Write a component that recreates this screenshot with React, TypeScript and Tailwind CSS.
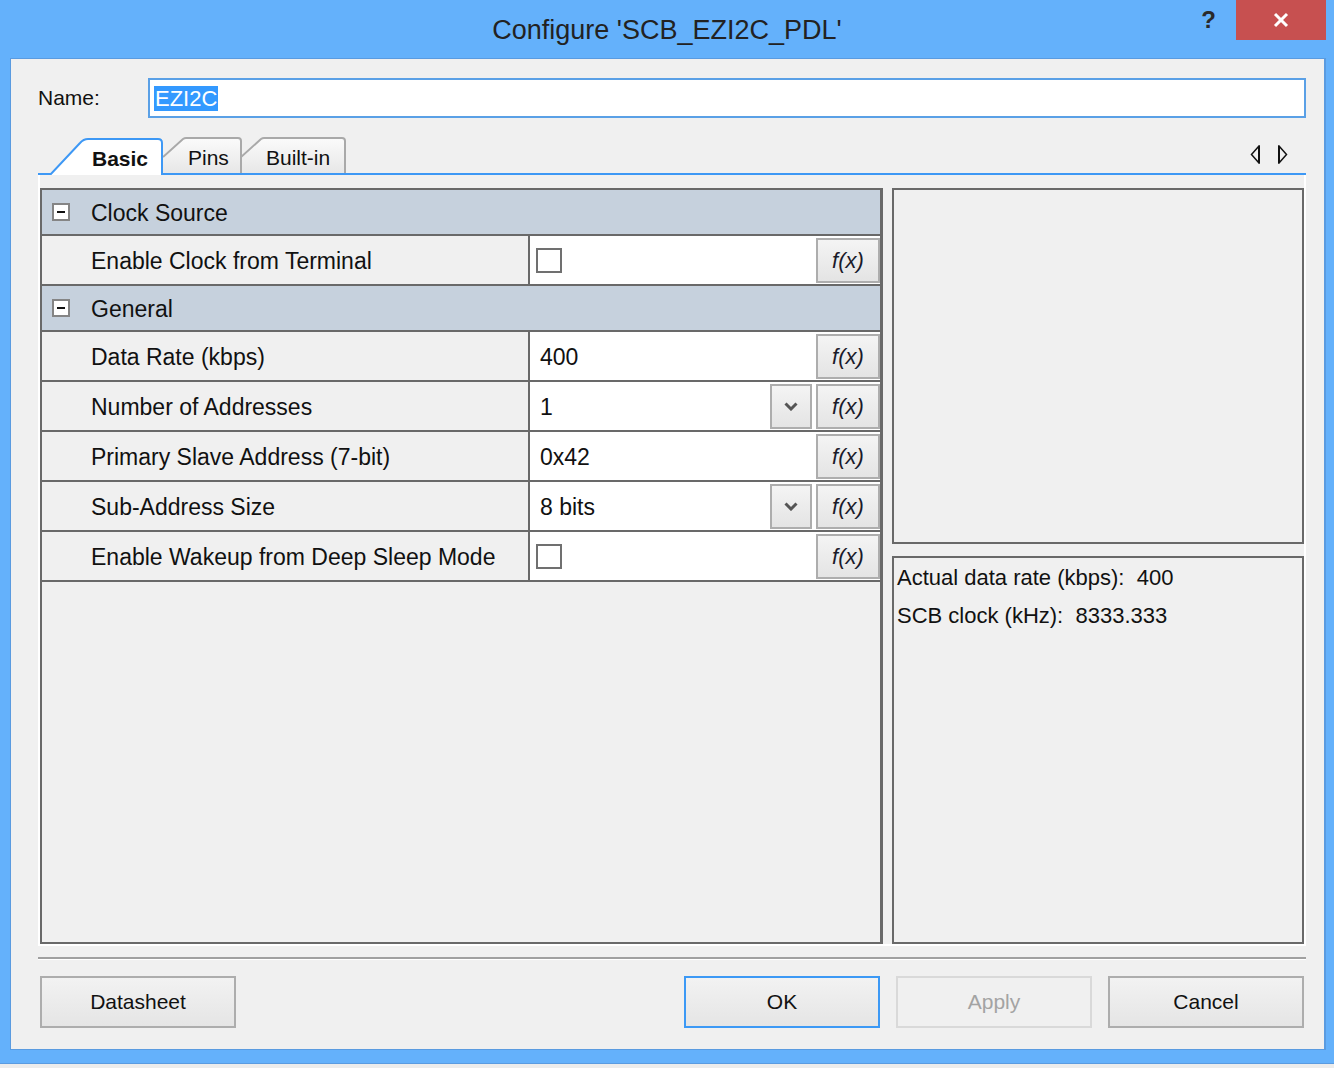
import React from "react";

const FONT = "font-['Liberation_Sans',Arial,sans-serif]";

function Fx() {
  return (
    <div className="mt-[2px] flex h-[45px] w-[64px] shrink-0 items-center justify-center self-start border-2 border-[#adadad] bg-linear-to-b from-[#f4f4f4] to-[#e4e4e4] pb-[1px] text-[22px] italic text-[#1a1a2a]">
      f(x)
    </div>
  );
}

function Drop() {
  return (
    <div className="mr-[4px] mt-[2px] flex h-[45px] w-[42px] shrink-0 items-center justify-center self-start border-2 border-[#adadad] bg-linear-to-b from-[#f4f4f4] to-[#e4e4e4]">
      <svg width="14" height="9" viewBox="0 0 14 9">
        <polyline points="1.5,1.5 7,7 12.5,1.5" fill="none" stroke="#555" strokeWidth="3" />
      </svg>
    </div>
  );
}

function Category({ label }: { label: string }) {
  return (
    <div className="flex h-[46px] items-center border-b-2 border-[#696969] bg-[#c6d1dd]">
      <div className="ml-[10px] flex h-[18px] w-[18px] items-center justify-center border-2 border-[#858585] bg-white">
        <div className="h-[2px] w-[8px] bg-[#111]" />
      </div>
      <span className="ml-[21px] pt-[3px] text-[23px] text-[#111]">{label}</span>
    </div>
  );
}

function PropRow({
  label,
  value,
  checkbox,
  dropdown,
}: {
  label: string;
  value?: string;
  checkbox?: boolean;
  dropdown?: boolean;
}) {
  return (
    <div className="flex h-[50px] border-b-2 border-[#696969]">
      <div className="flex w-[488px] items-center border-r-2 border-[#696969] bg-[#f0f0f0] pl-[49px] pt-[3px] text-[23px] text-[#111]">
        {label}
      </div>
      <div className="flex flex-1 items-center bg-white">
        {checkbox ? (
          <div className="flex flex-1 items-center pl-[6px] pt-[1px]">
            <div className="h-[25px] w-[26px] border-2 border-[#707070] bg-white" />
          </div>
        ) : (
          <div className="flex flex-1 items-center pl-[10px] pt-[3px] text-[23px] text-[#111]">{value}</div>
        )}
        {dropdown && <Drop />}
        <Fx />
      </div>
    </div>
  );
}

function Button({
  label,
  variant = "normal",
}: {
  label: string;
  variant?: "normal" | "default" | "disabled";
}) {
  const border =
    variant === "default"
      ? "border-[#3c99f5]"
      : variant === "disabled"
      ? "border-[#d9d9d9]"
      : "border-[#adadad]";
  const text = variant === "disabled" ? "text-[#a3a3a3]" : "text-[#111]";
  const bg =
    variant === "disabled"
      ? "bg-[#f0f0f0]"
      : "bg-linear-to-b from-[#f2f2f2] to-[#e5e5e5]";
  return (
    <div
      className={`flex h-[52px] w-[196px] items-center justify-center border-2 ${border} ${bg} ${text} text-[21px]`}
    >
      {label}
    </div>
  );
}

export default function App() {
  return (
    <div className={`${FONT} flex h-[1068px] w-[1334px] flex-col bg-[#64b1fb]`}>
      {/* Title bar */}
      <div className="grid h-[58px] grid-cols-[1fr_auto_1fr]">
        <div />
        <div className="flex items-center pt-[2px] text-[27px] text-[#222]">
          Configure 'SCB_EZI2C_PDL'
        </div>
        <div className="flex items-start justify-end pr-[8px]">
          <div className="mr-[20px] mt-[5px] text-[24px] font-bold leading-[30px] text-[#2a2a2a]">?</div>
          <div className="flex h-[40px] w-[90px] items-center justify-center bg-[#c75050]">
            <svg width="16" height="16" viewBox="0 0 16 16">
              <line x1="2" y1="2" x2="14" y2="14" stroke="white" strokeWidth="3" />
              <line x1="14" y1="2" x2="2" y2="14" stroke="white" strokeWidth="3" />
            </svg>
          </div>
        </div>
      </div>

      {/* Client area */}
      <div className="ml-[10px] mr-[8px] flex h-[992px] flex-col border border-r-2 border-[#5a9be0] bg-[#f0f0f0] pl-[27px] pr-[18px]">
        {/* Name row */}
        <div className="mt-[19px] flex h-[40px] items-center">
          <div className="w-[110px] text-[21px] text-[#111]">Name:</div>
          <div className="flex h-[40px] flex-1 items-center border-2 border-[#5aa0e6] bg-white pl-[4px]">
            <span className="bg-[#3399ff] px-[1px] text-[22px] leading-[25px] text-white">EZI2C</span>
          </div>
        </div>

        {/* Tabs */}
        <div className="mt-[19px] flex h-[38px] items-end border-b-2 border-[#3d98f5]">
          <div className="relative z-10 -mb-[2px] ml-[10px] flex h-[38px] w-[117px] items-center pl-[44px] pt-[5px]">
            <svg className="absolute inset-0" width="117" height="38" viewBox="0 0 117 38">
              <path d="M2 38 L32 6 Q35.5 2 40 2 L110 2 Q114 2 114 6 L114 38 Z" fill="white" />
              <path d="M2 38 L32 6 Q35.5 2 40 2 L110 2 Q114 2 114 6 L114 38" fill="none" stroke="#3d98f5" strokeWidth="2" />
            </svg>
            <span className="relative text-[21px] font-bold text-[#111]">Basic</span>
          </div>
          <div className="relative z-[5] -ml-[2px] flex h-[36px] w-[80px] items-center pl-[25px] pt-[5px]">
            <svg className="absolute inset-0" width="80" height="36" viewBox="0 0 80 36">
              <defs>
                <linearGradient id="tg" x1="0" y1="0" x2="0" y2="1">
                  <stop offset="0" stopColor="#fbfbfb" />
                  <stop offset="1" stopColor="#e7e7e7" />
                </linearGradient>
              </defs>
              <path d="M0 36 L0 20 L20 2 Q21.5 1 23 1 L75 1 Q78 1 78 4 L78 36 Z" fill="url(#tg)" />
              <path d="M0 20 L20 2 Q21.5 1 23 1 L75 1 Q78 1 78 4 L78 36" fill="none" stroke="#a9a9a9" strokeWidth="2" />
            </svg>
            <span className="relative text-[21px] text-[#111]">Pins</span>
          </div>
          <div className="relative -ml-[2px] flex h-[36px] w-[106px] items-center pl-[25px] pt-[5px]">
            <svg className="absolute inset-0" width="106" height="36" viewBox="0 0 106 36">
              <defs>
                <linearGradient id="tg2" x1="0" y1="0" x2="0" y2="1">
                  <stop offset="0" stopColor="#fbfbfb" />
                  <stop offset="1" stopColor="#e7e7e7" />
                </linearGradient>
              </defs>
              <path d="M0 36 L0 20 L20 2 Q21.5 1 23 1 L101 1 Q104 1 104 4 L104 36 Z" fill="url(#tg2)" />
              <path d="M0 20 L20 2 Q21.5 1 23 1 L101 1 Q104 1 104 4 L104 36" fill="none" stroke="#a9a9a9" strokeWidth="2" />
            </svg>
            <span className="relative text-[21px] text-[#111]">Built-in</span>
          </div>
          <div className="mb-[9px] ml-auto mr-[18px] flex items-center gap-[18px]">
            <svg width="10" height="19" viewBox="0 0 10 19">
              <polygon points="9,1 1.5,9.5 9,18" fill="none" stroke="#111" strokeWidth="1.5" />
              <line x1="9" y1="1" x2="9" y2="18" stroke="#111" strokeWidth="2" />
            </svg>
            <svg width="10" height="19" viewBox="0 0 10 19">
              <polygon points="1,1 8.5,9.5 1,18" fill="none" stroke="#111" strokeWidth="1.5" />
              <line x1="1" y1="1" x2="1" y2="18" stroke="#111" strokeWidth="2" />
            </svg>
          </div>
        </div>

        {/* Tab page */}
        <div className="flex h-[771px] border-x-2 border-b-2 border-white pt-[13px]">
          {/* Property grid */}
          <div className="flex h-[756px] w-[843px] flex-col border-2 border-r-[3px] border-[#696969] bg-[#f0f0f0]">
            <Category label="Clock Source" />
            <PropRow label="Enable Clock from Terminal" checkbox />
            <Category label="General" />
            <PropRow label="Data Rate (kbps)" value="400" />
            <PropRow label="Number of Addresses" value="1" dropdown />
            <PropRow label="Primary Slave Address (7-bit)" value="0x42" />
            <PropRow label="Sub-Address Size" value="8 bits" dropdown />
            <PropRow label="Enable Wakeup from Deep Sleep Mode" checkbox />
          </div>
          <div className="w-[9px]" />
          {/* Right panels */}
          <div className="flex w-[412px] flex-col gap-[12px]">
            <div className="h-[356px] border-2 border-[#696969]" />
            <div className="flex-1 border-2 border-[#696969] pl-[3px] pt-[1px] text-[22px] leading-[38px] text-[#111]">
              <div className="whitespace-pre">Actual data rate (kbps):  400</div>
              <div className="whitespace-pre">SCB clock (kHz):  8333.333</div>
            </div>
          </div>
        </div>

        {/* Separator */}
        <div className="mt-[11px] h-[3px] border-b border-white bg-[#a0a0a0]" />

        {/* Buttons */}
        <div className="mt-[16px] flex px-[2px]">
          <Button label="Datasheet" />
          <div className="ml-auto flex gap-[16px]">
            <Button label="OK" variant="default" />
            <Button label="Apply" variant="disabled" />
            <Button label="Cancel" />
          </div>
        </div>
      </div>

      <div className="h-[13px]" />
      <div className="h-[1px] bg-[#5a9be0]" />
      <div className="h-[4px] bg-[#ececec]" />
    </div>
  );
}
